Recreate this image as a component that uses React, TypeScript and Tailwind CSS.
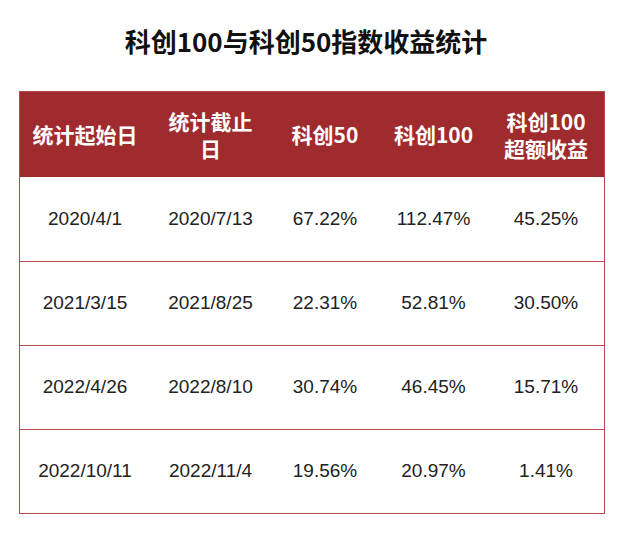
const rows = [
  ["2020/4/1", "2020/7/13", "67.22%", "112.47%", "45.25%"],
  ["2021/3/15", "2021/8/25", "22.31%", "52.81%", "30.50%"],
  ["2022/4/26", "2022/8/10", "30.74%", "46.45%", "15.71%"],
  ["2022/10/11", "2022/11/4", "19.56%", "20.97%", "1.41%"],
];

const cols = "grid grid-cols-[130px_121px_108px_109px_116px]";

export default function App() {
  return (
    <div className="w-[638px] h-[537px] bg-white font-['Liberation_Sans','Noto_Sans_CJK_SC',sans-serif]">
      <div className="h-[80px] flex items-center justify-center pr-[26px]">
        <h1 className="text-[26px] font-bold text-[#111] font-['Noto_Sans_CJK_SC',sans-serif]">
          科创100与科创50指数收益统计
        </h1>
      </div>
      <div className="ml-[19px] mt-[11px] w-[586px] border-[1.5px] border-[#b8474a]">
        <div
          className={`${cols} h-[85px] bg-[#a02b2e] text-white font-bold text-[21px] leading-[27px] font-['Noto_Sans_CJK_SC',sans-serif]`}
        >
          <div className="flex items-center justify-center text-center">统计起始日</div>
          <div className="flex items-center justify-center text-center">
            统计截止
            <br />日
          </div>
          <div className="flex items-center justify-center text-center">科创50</div>
          <div className="flex items-center justify-center text-center">科创100</div>
          <div className="flex items-center justify-center text-center">
            科创100
            <br />
            超额收益
          </div>
        </div>
        {rows.map((r, i) => (
          <div
            key={i}
            className={`${cols} h-[84px] text-[#222] text-[19px] ${i > 0 ? "border-t border-[#b8474a]" : ""}`}
          >
            {r.map((c, j) => (
              <div key={j} className="flex items-center justify-center">
                {c}
              </div>
            ))}
          </div>
        ))}
      </div>
    </div>
  );
}
